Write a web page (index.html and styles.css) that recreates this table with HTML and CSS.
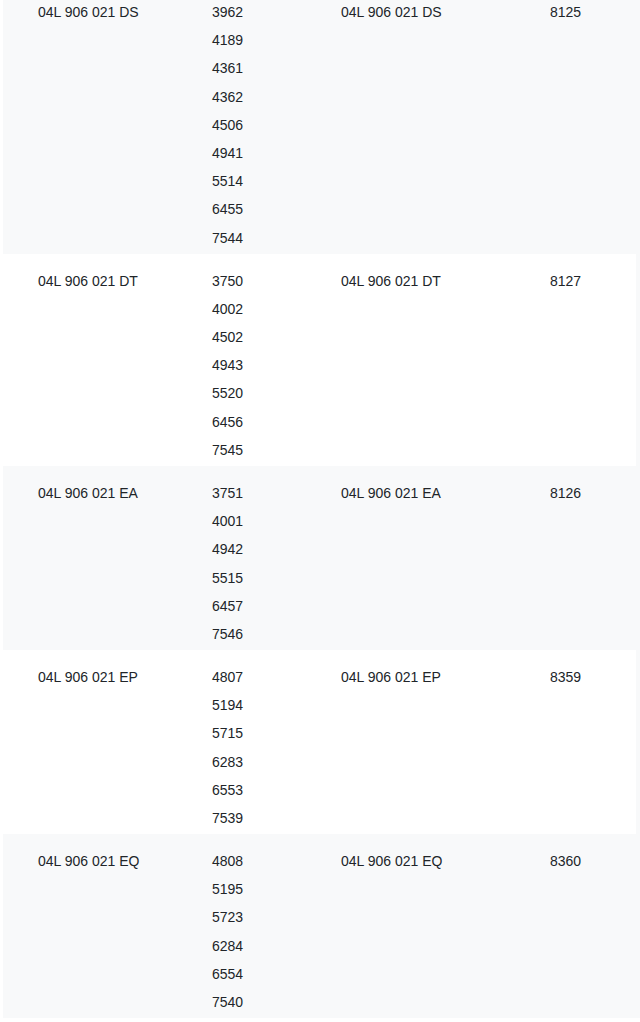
FILE: index.html
```html
<!DOCTYPE html>
<html>
<head>
<meta charset="utf-8">
<link rel="stylesheet" href="styles.css">
</head>
<body>
<div class="wrap">
<table class="parts">
<colgroup>
<col class="c1"><col class="c2"><col class="c3"><col class="c4">
</colgroup>
<tbody>
<tr class="odd first">
<td><div class="ln">04L 906 021 DS</div></td>
<td><div class="ln">3962</div><div class="ln">4189</div><div class="ln">4361</div><div class="ln">4362</div><div class="ln">4506</div><div class="ln">4941</div><div class="ln">5514</div><div class="ln">6455</div><div class="ln">7544</div></td>
<td><div class="ln">04L 906 021 DS</div></td>
<td><div class="ln">8125</div></td>
</tr>
<tr>
<td><div class="ln">04L 906 021 DT</div></td>
<td><div class="ln">3750</div><div class="ln">4002</div><div class="ln">4502</div><div class="ln">4943</div><div class="ln">5520</div><div class="ln">6456</div><div class="ln">7545</div></td>
<td><div class="ln">04L 906 021 DT</div></td>
<td><div class="ln">8127</div></td>
</tr>
<tr class="odd">
<td><div class="ln">04L 906 021 EA</div></td>
<td><div class="ln">3751</div><div class="ln">4001</div><div class="ln">4942</div><div class="ln">5515</div><div class="ln">6457</div><div class="ln">7546</div></td>
<td><div class="ln">04L 906 021 EA</div></td>
<td><div class="ln">8126</div></td>
</tr>
<tr>
<td><div class="ln">04L 906 021 EP</div></td>
<td><div class="ln">4807</div><div class="ln">5194</div><div class="ln">5715</div><div class="ln">6283</div><div class="ln">6553</div><div class="ln">7539</div></td>
<td><div class="ln">04L 906 021 EP</div></td>
<td><div class="ln">8359</div></td>
</tr>
<tr class="odd">
<td><div class="ln">04L 906 021 EQ</div></td>
<td><div class="ln">4808</div><div class="ln">5195</div><div class="ln">5723</div><div class="ln">6284</div><div class="ln">6554</div><div class="ln">7540</div></td>
<td><div class="ln">04L 906 021 EQ</div></td>
<td><div class="ln">8360</div></td>
</tr>
</tbody>
</table>
</div>
</body>
</html>
```
FILE: styles.css
```css
html {
  background: #ffffff;
}
body {
  margin: 0 0 0 3px;
  background: #f8f9fa;
  font-family: "Liberation Sans", Arial, sans-serif;
  font-size: 14px;
  color: #212529;
  overflow: hidden;
}
.wrap {
  margin-top: -15px;
}
.parts {
  width: 633px;
  border-collapse: collapse;
  table-layout: fixed;
  background: #ffffff;
}
.c1 { width: 174px; }
.c2 { width: 129px; }
.c3 { width: 209px; }
.c4 { width: 121px; }
.parts td {
  vertical-align: top;
  padding: 13px 0 1.85px 35px;
}
.parts tr.odd td {
  background: #f8f9fa;
}
.ln {
  line-height: 28.2px;
  white-space: nowrap;
}
```
